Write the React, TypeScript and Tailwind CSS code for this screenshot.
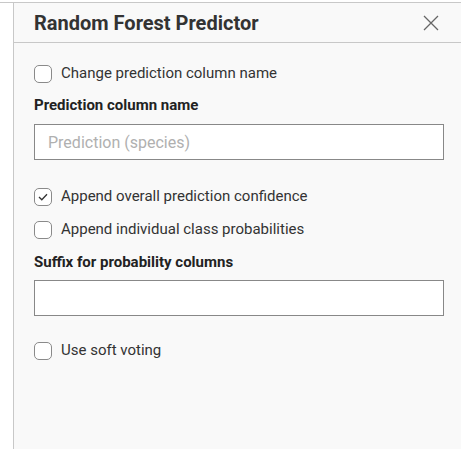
import React from "react";

const Check = ({ checked, label }: { checked?: boolean; label: string }) => (
  <label className="flex items-center gap-[9px] h-[33px]">
    <span className="w-[18px] h-[18px] rounded-[5px] border border-[#8a8a8a] bg-white flex items-center justify-center">
      {checked && (
        <svg width="10" height="8" viewBox="0 0 10 8" fill="none">
          <path d="M1 4l2.8 2.8L9 1.3" stroke="#333" strokeWidth="1.3" />
        </svg>
      )}
    </span>
    <span className="text-[15px] text-[#333]">{label}</span>
  </label>
);

const App = () => {
  return (
    <div className="h-[449px] w-[461px] bg-white pt-[2px] font-['Roboto',sans-serif]">
      <div className="border-t border-[#c8c8c8] h-full flex">
        <div className="w-[13px]" />
        <div className="flex-1 border-l border-[#c8c8c8] bg-[#f9f9f9] flex flex-col">
          <div className="h-[40px] border-b border-[#c8c8c8] flex items-center justify-between pl-[20px] pr-[22px]">
            <h1 className="text-[20px] font-bold text-[#333] leading-none">Random Forest Predictor</h1>
            <svg width="16" height="16" viewBox="0 0 16 16">
              <path d="M1 1l14 14M15 1L1 15" stroke="#666" strokeWidth="1.3" />
            </svg>
          </div>
          <div className="pl-[20px] pr-[17px] pt-[14px] flex flex-col">
            <Check label="Change prediction column name" />
            <div className="mt-[5px] text-[15px] font-bold text-[#222] leading-[20px]">Prediction column name</div>
            <input
              className="mt-[9px] h-[36px] w-full border border-[#888] bg-white px-[13px] text-[16px] placeholder-[#b0b0b0] outline-none"
              placeholder="Prediction (species)"
            />
            <div className="mt-[20px]">
              <Check checked label="Append overall prediction confidence" />
            </div>
            <Check label="Append individual class probabilities" />
            <div className="mt-[6px] text-[15px] font-bold text-[#222] leading-[20px]">Suffix for probability columns</div>
            <input className="mt-[8px] h-[36px] w-full border border-[#888] bg-white px-[13px] text-[16px] outline-none" />
            <div className="mt-[18px]">
              <Check label="Use soft voting" />
            </div>
          </div>
        </div>
      </div>
    </div>
  );
};

export default App;
